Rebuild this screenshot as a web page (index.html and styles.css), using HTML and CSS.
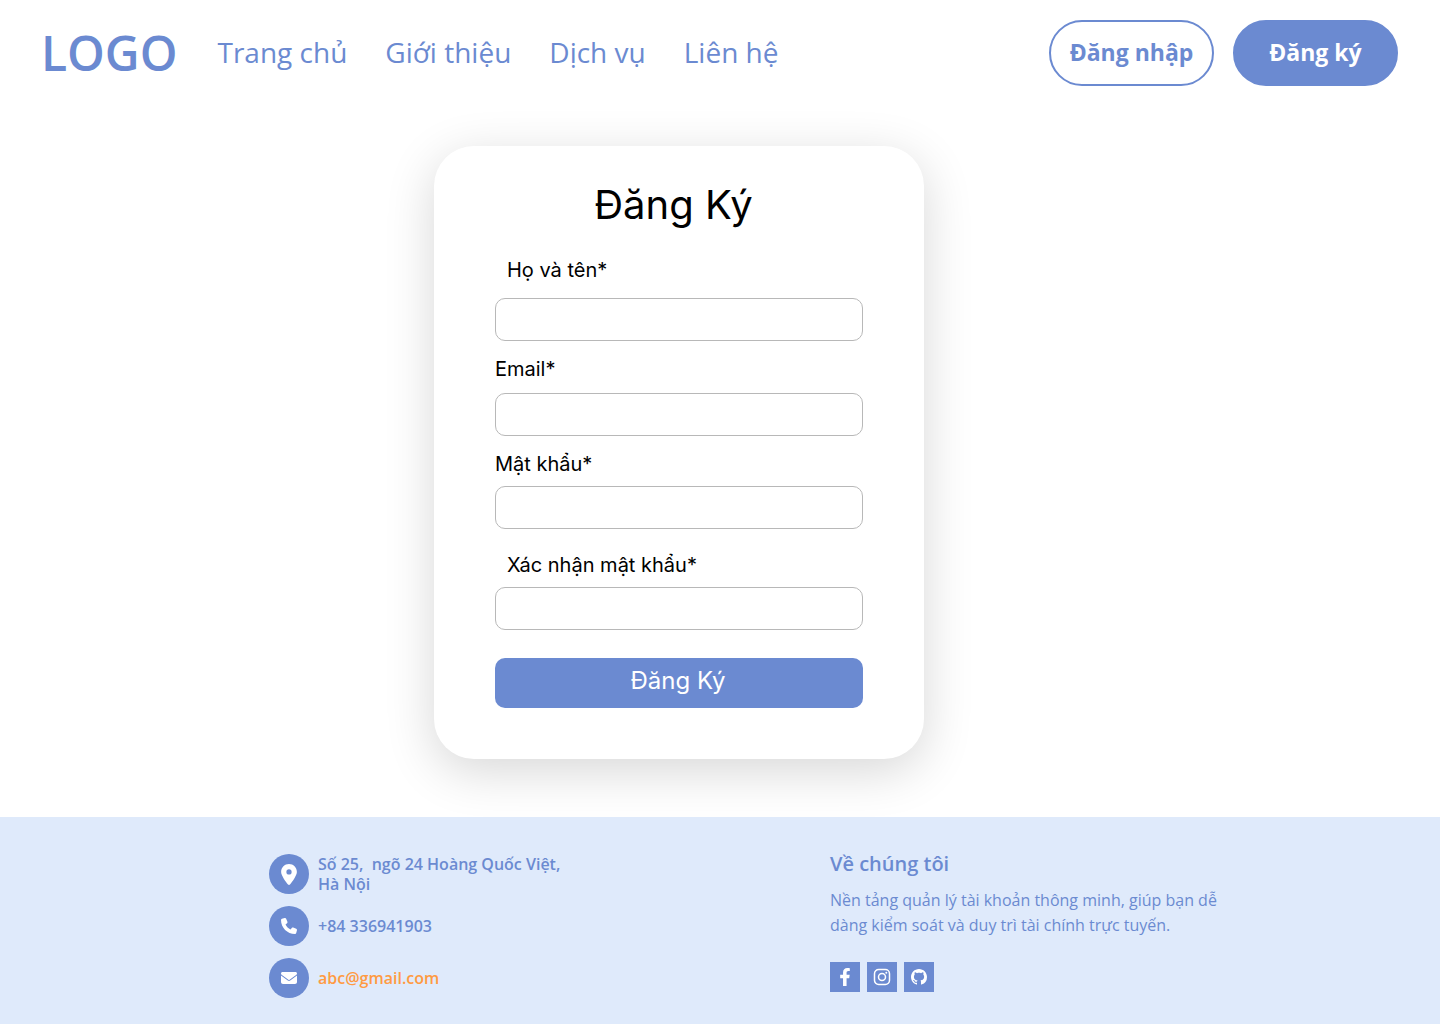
FILE: index.html
```html
<!DOCTYPE html>
<html lang="vi">
<head>
  <meta charset="utf-8">
  <meta name="viewport" content="width=device-width, initial-scale=1">
  <title>Đăng Ký</title>
  <link rel="stylesheet" href="styles.css">
</head>
<body>
  <header class="header">
    <a class="logo" href="#">LOGO</a>
    <nav class="nav">
      <a href="#">Trang chủ</a>
      <a href="#">Giới thiệu</a>
      <a href="#">Dịch vụ</a>
      <a href="#">Liên hệ</a>
    </nav>
    <div class="actions">
      <button class="pill pill-outline" type="button">Đăng nhập</button>
      <button class="pill pill-solid" type="button">Đăng ký</button>
    </div>
  </header>

  <main class="main">
    <form class="card">
      <h1 class="card-title">Đăng Ký</h1>
      <div class="field field-roomy">
        <label class="label-inset" for="name">Họ và tên*</label>
        <input id="name" type="text">
      </div>
      <div class="field field-medium">
        <label for="email">Email*</label>
        <input id="email" type="email">
      </div>
      <div class="field">
        <label for="password">Mật khẩu*</label>
        <input id="password" type="password">
      </div>
      <div class="field field-apart">
        <label class="label-inset" for="confirm">Xác nhận mật khẩu*</label>
        <input id="confirm" type="password">
      </div>
      <button class="submit" type="submit">Đăng Ký</button>
    </form>
  </main>

  <footer class="footer">
    <address class="contact">
      <div class="contact-row">
        <span class="badge"><svg width="16" height="21" viewBox="0 0 384 512"><path d="M215.7 499.2C267 435 384 279.4 384 192C384 86 298 0 192 0S0 86 0 192c0 87.4 117 243 168.3 307.2c12.3 15.3 35.1 15.3 47.4 0zM192 128a64 64 0 1 1 0 128 64 64 0 1 1 0-128z"/></svg></span>
        <span>Số 25,&nbsp; ngõ 24 Hoàng Quốc Việt,<br>Hà Nội</span>
      </div>
      <div class="contact-row">
        <span class="badge"><svg width="16" height="16" viewBox="0 0 512 512"><path d="M164.9 24.6c-7.7-18.6-28-28.5-47.4-23.2l-88 24C12.1 30.2 0 46 0 64C0 311.4 200.6 512 448 512c18 0 33.8-12.1 38.6-29.5l24-88c5.3-19.4-4.6-39.7-23.2-47.4l-96-40c-16.3-6.8-35.2-2.1-46.3 11.6L304.7 368C234.3 334.7 177.3 277.7 144 207.3L193.3 167c13.7-11.2 18.4-30 11.6-46.3l-40-96z"/></svg></span>
        <span>+84 336941903</span>
      </div>
      <div class="contact-row">
        <span class="badge"><svg width="16" height="16" viewBox="0 0 512 512"><path d="M48 64C21.5 64 0 85.5 0 112c0 15.1 7.1 29.3 19.2 38.4L236.8 313.6c11.4 8.5 27 8.5 38.4 0L492.8 150.4c12.1-9.1 19.2-23.3 19.2-38.4c0-26.5-21.5-48-48-48H48zM0 176V384c0 35.3 28.7 64 64 64H448c35.3 0 64-28.7 64-64V176L294.4 339.2c-22.8 17.1-54 17.1-76.8 0L0 176z"/></svg></span>
        <a class="email" href="mailto:abc@gmail.com">abc@gmail.com</a>
      </div>
    </address>
    <section class="about">
      <h2>Về chúng tôi</h2>
      <p>Nền tảng quản lý tài khoản thông minh, giúp bạn dễ dàng kiểm soát và duy trì tài chính trực tuyến.</p>
      <div class="social">
        <a href="#" aria-label="Facebook"><svg width="12" height="18" viewBox="0 0 320 512"><path d="M279.14 288l14.22-92.66h-88.91v-60.13c0-25.35 12.42-50.06 52.24-50.06h40.42V6.26S260.43 0 225.36 0c-73.22 0-121.08 44.38-121.08 124.72v70.62H22.89V288h81.39v224h100.17V288z"/></svg></a>
        <a href="#" aria-label="Instagram"><svg width="18" height="18" viewBox="0 0 18 18"><rect class="line" x="1.5" y="1.5" width="15" height="15" rx="4.2"/><circle class="line" cx="9" cy="9" r="3.5"/><circle cx="13.3" cy="4.7" r="1"/></svg></a>
        <a href="#" aria-label="GitHub"><svg width="16" height="16" viewBox="0 0 16 16"><path d="M8 0C3.58 0 0 3.58 0 8c0 3.54 2.29 6.53 5.47 7.59.4.07.55-.17.55-.38 0-.19-.01-.82-.01-1.49-2.01.37-2.53-.49-2.69-.94-.09-.23-.48-.94-.82-1.13-.28-.15-.68-.52-.01-.53.63-.01 1.08.58 1.23.82.72 1.21 1.87.87 2.33.66.07-.52.28-.87.51-1.07-1.78-.2-3.64-.89-3.64-3.95 0-.87.31-1.59.82-2.15-.08-.2-.36-1.02.08-2.12 0 0 .67-.21 2.2.82.64-.18 1.32-.27 2-.27s1.36.09 2 .27c1.53-1.04 2.2-.82 2.2-.82.44 1.1.16 1.92.08 2.12.51.56.82 1.27.82 2.15 0 3.07-1.87 3.75-3.65 3.95.29.25.54.73.54 1.48 0 1.07-.01 1.93-.01 2.2 0 .21.15.46.55.38A8.013 8.013 0 0 0 16 8c0-4.42-3.58-8-8-8z"/></svg></a>
      </div>
    </section>
  </footer>
</body>
</html>
```
FILE: styles.css
```css
:root {
  --blue: #6b8ad1;
  --pale: #dfeafb;
  --orange: #ff9a42;
}

* {
  box-sizing: border-box;
}

body {
  margin: 0;
  min-height: 100vh;
  display: flex;
  flex-direction: column;
  background: #fff;
  color: var(--blue);
  font-family: "Open Sans", "Noto Sans", sans-serif;
}

a {
  color: inherit;
  text-decoration: none;
}

svg {
  display: block;
  fill: #fff;
}

.header {
  display: flex;
  align-items: center;
  padding: 20px 42px 20px 41px;
}

.logo {
  font-size: 48px;
  font-weight: 600;
  line-height: 64px;
}

.nav {
  display: flex;
  gap: 38px;
  margin-left: 40px;
  padding-bottom: 2px;
  font-size: 28px;
  line-height: 40px;
}

.actions {
  display: flex;
  gap: 19px;
  margin-left: auto;
}

.pill {
  width: 165px;
  height: 66px;
  padding: 0 0 2px;
  border: 2px solid var(--blue);
  border-radius: 33px;
  font-family: inherit;
  font-size: 23px;
  font-weight: 700;
}

.pill-outline {
  background: #fff;
  color: var(--blue);
}

.pill-solid {
  background: var(--blue);
  color: #fff;
}

.main {
  flex: 1;
  display: flex;
  justify-content: center;
  align-items: flex-start;
  padding: 40px 82px 58px 0;
}

.card {
  width: 490px;
  padding: 35px 61px 51px;
  border-radius: 40px;
  background: #fff;
  box-shadow: 0 12px 50px rgba(0, 0, 0, 0.16);
  color: #000;
  font-family: Inter, sans-serif;
}

.card-title {
  margin: 0 0 29px;
  padding-right: 11px;
  font-size: 40px;
  font-weight: 400;
  line-height: 48px;
  text-align: center;
}

.field {
  display: flex;
  flex-direction: column;
  gap: 10px;
  margin-bottom: 16px;
  font-size: 20px;
  line-height: 24px;
}

.field-roomy {
  gap: 16px;
}

.field-medium {
  gap: 12px;
}

.field-apart {
  margin: 24px 0 28px;
}

.label-inset {
  padding-left: 12px;
}

.field input {
  width: 100%;
  height: 43px;
  padding: 0 12px;
  border: 1px solid #b8b8b8;
  border-radius: 10px;
  background: #fff;
  font: inherit;
}

.submit {
  display: block;
  width: 100%;
  height: 50px;
  padding: 0 2px 6px 0;
  border: 0;
  border-radius: 10px;
  background: var(--blue);
  color: #fff;
  font-family: inherit;
  font-size: 24px;
}

.footer {
  display: grid;
  grid-template-columns: 1fr 1fr;
  padding: 37px 49px 26px 269px;
  background: var(--pale);
}

.contact {
  display: flex;
  flex-direction: column;
  gap: 12px;
  font-size: 16px;
  font-style: normal;
  font-weight: 600;
  line-height: 20px;
}

.contact-row {
  display: flex;
  align-items: center;
  gap: 9px;
}

.badge {
  display: grid;
  place-items: center;
  width: 40px;
  height: 40px;
  border-radius: 50%;
  background: var(--blue);
}

.email {
  color: var(--orange);
}

.about h2 {
  margin: 0 0 14px;
  font-size: 20px;
  font-weight: 600;
  line-height: 20px;
}

.about p {
  max-width: 400px;
  margin: 0 0 24px;
  font-size: 16px;
  line-height: 25px;
}

.social {
  display: flex;
  gap: 7px;
}

.social a {
  display: grid;
  place-items: center;
  width: 30px;
  height: 30px;
  background: var(--blue);
}

.line {
  fill: none;
  stroke: #fff;
  stroke-width: 1.5;
}
```
